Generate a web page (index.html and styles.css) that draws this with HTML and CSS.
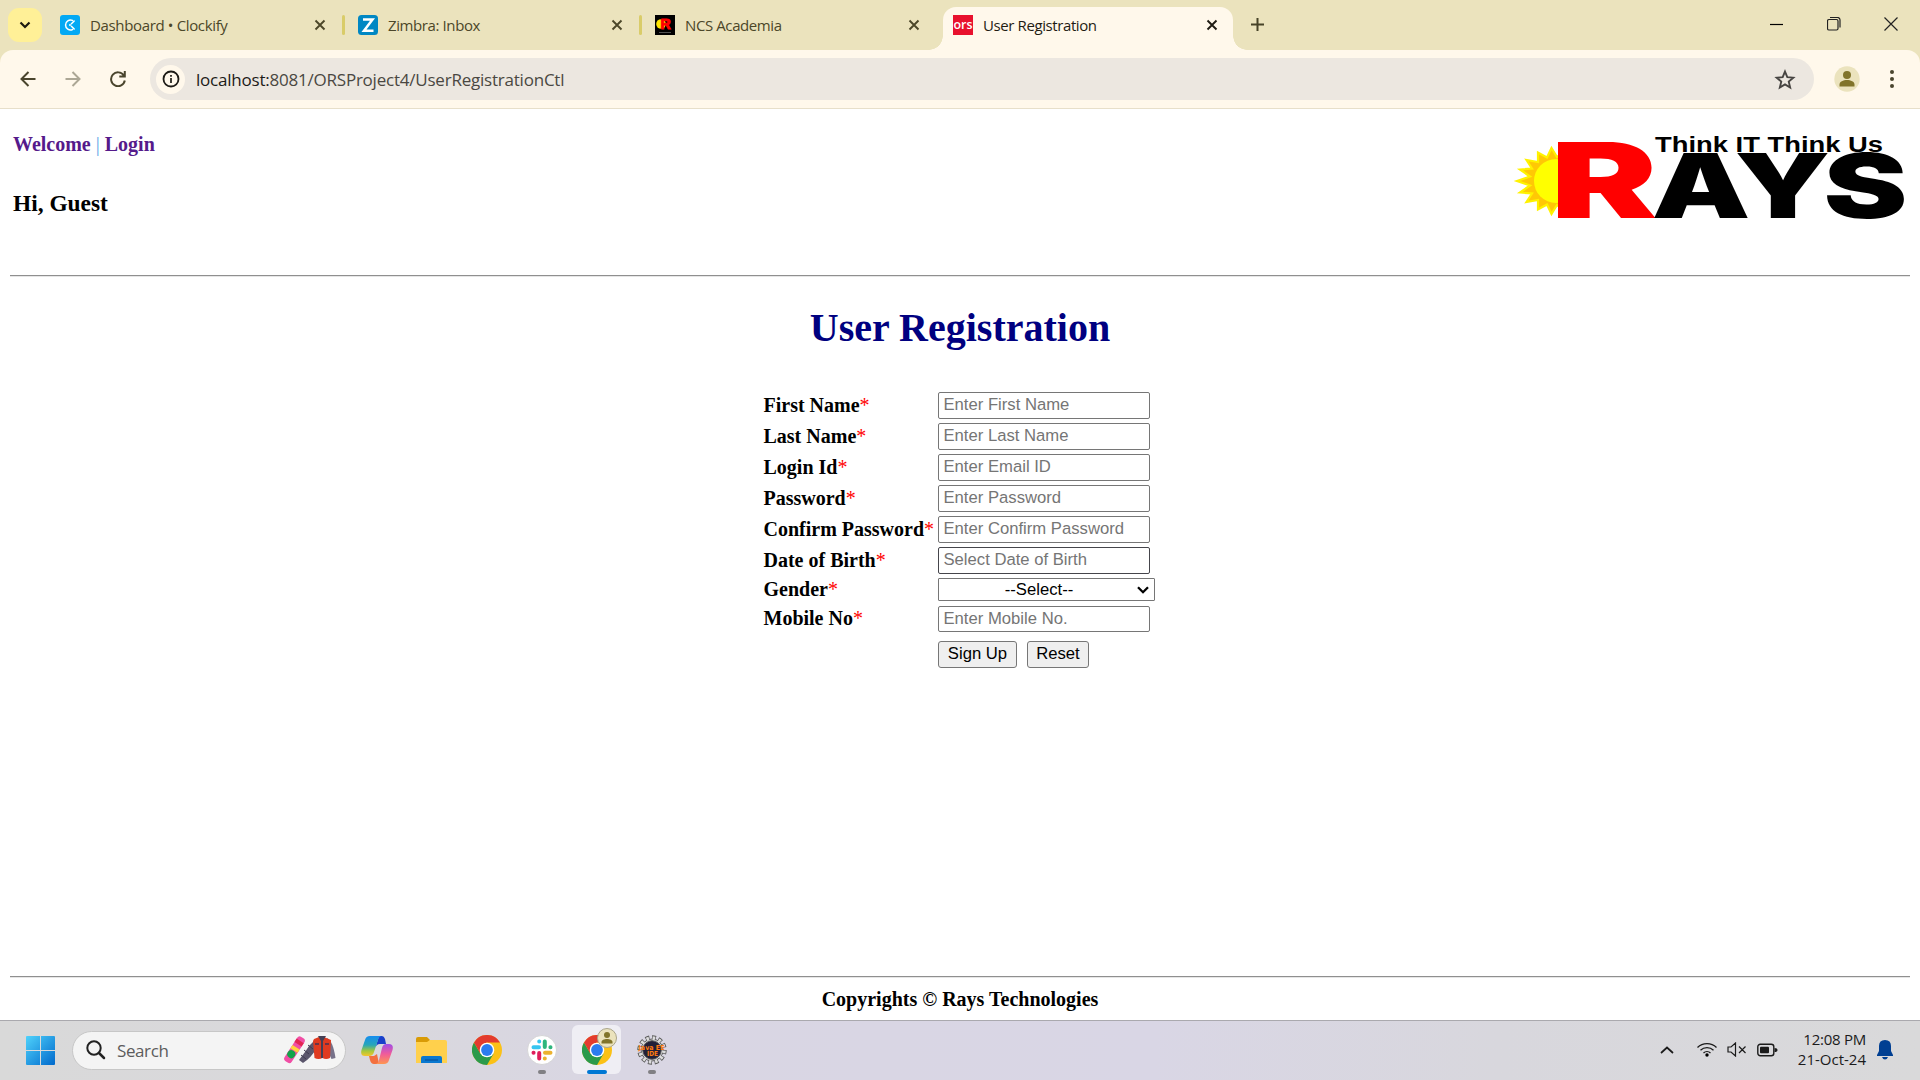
FILE: index.html
```html
<!DOCTYPE html>
<html lang="en">
<head>
<meta charset="utf-8">
<title>User Registration</title>
<link rel="stylesheet" href="styles.css">
</head>
<body>
<header class="tabstrip">
  <button class="tab-search" aria-label="Search tabs"><svg width="12" height="8" viewBox="0 0 12 8"><path d="M1.5 1.5 6 6l4.500-4.500" fill="none" stroke="#1d1b10" stroke-width="2.200"/></svg></button>
  <div class="tab tab-first">
    <svg class="favicon" viewBox="0 0 20 20"><rect width="20" height="20" rx="3" fill="#03a9f4"/><path d="M12.500 5.400A5 5 0 1 0 12.500 14.600M14.200 6l-2.800 2.800M14.200 14l-2.800-2.800" fill="none" stroke="#fff" stroke-width="1.500" stroke-linecap="round"/><circle cx="10" cy="10" r="1" fill="#fff"/></svg>
    <span class="tab-title t1">Dashboard • Clockify</span>
    <svg class="close" viewBox="0 0 12 12"><path d="M1.500 1.500l9 9M10.500 1.500l-9 9"/></svg>
  </div>
  <i class="divider"></i>
  <div class="tab">
    <svg class="favicon" viewBox="0 0 20 20"><rect width="20" height="20" rx="3.500" fill="#0087c3"/><path d="M5 4.500h9.500L6 15.700h9.500" fill="none" stroke="#fff" stroke-width="2.500"/></svg>
    <span class="tab-title t2">Zimbra: Inbox</span>
    <svg class="close" viewBox="0 0 12 12"><path d="M1.500 1.500l9 9M10.500 1.500l-9 9"/></svg>
  </div>
  <i class="divider"></i>
  <div class="tab">
    <svg class="favicon" viewBox="0 0 20 20"><rect width="20" height="20"/><circle cx="6" cy="9" r="4.800" fill="#ffe600"/><text x="5.500" y="14" class="ncs-r">R</text><path d="M4 17.500h12" stroke="#666" stroke-width=".8"/></svg>
    <span class="tab-title t3">NCS Academia</span>
    <svg class="close" viewBox="0 0 12 12"><path d="M1.500 1.500l9 9M10.500 1.500l-9 9"/></svg>
  </div>
  <div class="tab active">
    <svg class="favicon" viewBox="0 0 20 20"><rect width="20" height="20" fill="#e8112d"/><text x="0.500" y="14" class="ors" textLength="19" lengthAdjust="spacingAndGlyphs">ors</text></svg>
    <span class="tab-title t4">User Registration</span>
    <svg class="close" viewBox="0 0 12 12"><path d="M1.500 1.500l9 9M10.500 1.500l-9 9"/></svg>
  </div>
  <svg class="newtab" viewBox="0 0 13 13"><path d="M6.500 0v13M0 6.500h13" stroke="#474328" stroke-width="2"/></svg>
  <div class="window-buttons">
    <svg width="14" height="14" viewBox="0 0 14 14"><path d="M0 7.500h13" stroke="#000"/></svg>
    <svg width="14" height="14" viewBox="0 0 14 14"><rect x=".5" y="2.500" width="10.500" height="10.500" rx="1.500"/><path d="M3 .5h7.500a2.500 2.500 0 0 1 2.500 2.500v7.500"/></svg>
    <svg width="14" height="14" viewBox="0 0 14 14"><path d="M.5.500l13 13M13.500.500l-13 13"/></svg>
  </div>
</header>
<nav class="toolbar">
  <svg class="nav-icon" viewBox="0 0 16 16"><path d="M15.500 8H2M8.500 1 1.500 8l7 7"/></svg>
  <svg class="nav-icon off" viewBox="0 0 16 16"><path d="M.500 8H14M7.500 1l7 7-7 7"/></svg>
  <svg class="nav-icon" viewBox="0 0 16 16"><path d="M13.800 4.500A6.900 6.900 0 1 0 14.800 9.500M14.800 0v5.500H9.300"/></svg>
  <div class="omnibox">
    <span class="site-info"><svg width="18" height="18" viewBox="0 0 18 18"><circle cx="9" cy="9" r="7.500" fill="none" stroke="#1d1b16" stroke-width="1.800"/><path d="M9 8v5M9 5v1.700" stroke="#1d1b16" stroke-width="1.700"/></svg></span>
    <span class="url"><b>localhost:</b>8081/ORSProject4/UserRegistrationCtl</span>
    <svg class="star" viewBox="0 0 20 20"><path d="M10 2.300l2.100 5.100 5.500.5-4.200 3.600 1.300 5.400L10 14l-4.700 2.900 1.300-5.400-4.200-3.600 5.500-.5z" fill="none" stroke="#474542" stroke-width="1.700"/></svg>
  </div>
  <svg class="avatar" viewBox="0 0 26 26"><circle cx="13" cy="13" r="12.700" fill="#ebe3bd"/><circle cx="13" cy="9" r="4" fill="#81742a"/><path d="M5.500 20.500v-2c0-6 15-6 15 0v2z" fill="#81742a"/></svg>
  <svg class="menu" viewBox="0 0 4 20"><circle cx="2" cy="3" r="2"/><circle cx="2" cy="10" r="2"/><circle cx="2" cy="17" r="2"/></svg>
</nav>
<main class="page">
  <section class="page-head">
    <div>
      <div class="links"><a>Welcome</a> <span class="bar">|</span> <a>Login</a></div>
      <h3>Hi, Guest</h3>
    </div>
    <svg class="logo" width="400" height="100" viewBox="1510 128 400 100">
      <polygon class="sun-rays" points="1517,181 1530,176.500 1520,169.500 1532,168.500 1526.500,160 1538,162 1538,152.500 1547,157.500 1551.500,148 1557,157 1560,155 1560,207 1557,205 1551.500,214 1547,204.500 1538,209.500 1538,200 1526.500,202 1532,193.500 1520,192.500 1530,185.500"/>
      <circle cx="1556" cy="181" r="22" fill="#ff0"/>
      <text x="1550.500" y="218" class="word red" font-size="104" textLength="107" lengthAdjust="spacingAndGlyphs">R</text>
      <text x="1651.500" y="218" class="word" font-size="89" textLength="99" lengthAdjust="spacingAndGlyphs">A</text>
      <text x="1734.500" y="218" class="word" font-size="89" textLength="96" lengthAdjust="spacingAndGlyphs">Y</text>
      <text x="1823.500" y="218" class="word" font-size="89" textLength="84" lengthAdjust="spacingAndGlyphs">S</text>
      <text x="1655" y="151.500" class="tagline" textLength="228" lengthAdjust="spacingAndGlyphs">Think IT Think Us</text>
    </svg>
  </section>
  <hr>
  <h1>User Registration</h1>
  <form class="form">
    <label>First Name<em>*</em></label><input placeholder="Enter First Name">
    <label>Last Name<em>*</em></label><input placeholder="Enter Last Name">
    <label>Login Id<em>*</em></label><input placeholder="Enter Email ID">
    <label>Password<em>*</em></label><input type="password" placeholder="Enter Password">
    <label>Confirm Password<em>*</em></label><input type="password" placeholder="Enter Confirm Password">
    <label>Date of Birth<em>*</em></label><input class="dob" placeholder="Select Date of Birth">
    <label class="gender">Gender<em>*</em></label>
    <div class="select"><span>--Select--</span><svg width="12" height="8" viewBox="0 0 12 8"><path d="M1 1.200l5 5 5-5" fill="none" stroke="#000" stroke-width="2.300"/></svg></div>
    <label class="mobile">Mobile No<em>*</em></label><input class="short" placeholder="Enter Mobile No.">
    <div class="actions"><button type="button" class="signup">Sign Up</button><button type="button" class="reset">Reset</button></div>
  </form>
  <footer><hr><p>Copyrights © Rays Technologies</p></footer>
</main>
<div class="taskbar">
  <svg class="start" viewBox="0 0 29 29"><defs><linearGradient id="win" x1="0" y1="0" x2="29" y2="29" gradientUnits="userSpaceOnUse"><stop offset="0" stop-color="#4fd2fb"/><stop offset="1" stop-color="#0069cc"/></linearGradient></defs><path fill="url(#win)" d="M1 0h13v14H0V1q0-1 1-1zM15 0h13q1 0 1 1v13H15zM0 15h14v14H1q-1 0-1-1zM15 15h14v13q0 1-1 1H15z"/></svg>
  <div class="search">
    <svg class="lens" viewBox="0 0 20 20"><circle cx="8" cy="8" r="6.700" fill="none" stroke="#222" stroke-width="2"/><path d="M13 13l5 5" stroke="#222" stroke-width="2.500" stroke-linecap="round"/></svg>
    <span>Search</span>
    <svg class="highlight" viewBox="0 0 54 30"><g transform="rotate(33 11 15)"><rect x="7" y="0" width="8.500" height="29" rx="3" fill="#f04fa5"/><path d="M7 4h8.500v4H7z" fill="#e32652"/><path d="M7 11.500h8.500v4H7z" fill="#ffd33d"/><circle cx="11" cy="20" r="4" fill="#12a34a"/></g><path d="M31 6Q26 10 22 17l-6 8 4 3q8-5 13-14z" fill="#5b566c"/><path d="M21 15l5 4M25 10l5 4M18 20l5 4" stroke="#3f3b50" fill="none"/><path d="M44 3q6 3 8.500 20l-4 1-6-12z" fill="#77728a"/><path d="M31 4l5-2h5l7 3-1 18q-4 2-7.500 0-4 2-8 0L30 6z" fill="#df3a20"/><path d="M35 1h8l-3 5v17h-2V6z" fill="#443f54"/><path d="M32 9h4M42 9h4" stroke="#6c3347" stroke-width="2"/></svg>
  </div>
  <div class="app"><svg width="32" height="30" viewBox="0 0 32 30"><defs><linearGradient id="cp1" x2="0" y2="1"><stop stop-color="#168df0"/><stop offset=".45" stop-color="#27a6b8"/><stop offset=".75" stop-color="#a6c83a"/><stop offset="1" stop-color="#f4c52c"/></linearGradient><linearGradient id="cp2" x2="0" y2="1"><stop stop-color="#a04ee6"/><stop offset=".5" stop-color="#f05c9a"/><stop offset="1" stop-color="#ff9651"/></linearGradient></defs><path d="M18 1h3q2 0 3 3l1 5h-6q-4 0-5 5z" fill="#1a3fca"/><path d="M9 1h12q-3 0-4 4l-4 12q-1 4-5 4H4q-5 0-3.500-6L4 5q1-4 5-4z" fill="url(#cp1)"/><path d="M8 21h5l3-2 2 10h-5q-3 0-4-4z" fill="#f3703f"/><path d="M25 9h3q5 0 3.500 6L28 25q-1 4-5 4h-9q3 0 4-4l3-12q1-4 4-4z" fill="url(#cp2)"/></svg></div>
  <div class="app"><svg width="31" height="28" viewBox="0 0 31 28"><path d="M0 3q0-2 2-2h9l3 3-2 4H0z" fill="#d99b06"/><path d="M0 6h11l3-2h15q2 0 2 2v21H0z" fill="#ffd04c"/><path d="M5 27v-5q0-2 2-2h17q2 0 2 2v5z" fill="#0a78d0"/><path d="M9 24h13" stroke="#064b91"/></svg></div>
  <div class="app"><svg width="30" height="30" viewBox="0 0 30 30"><g id="chrome"><circle cx="15" cy="15" r="15" fill="#fbc116"/><path d="M15 15 8.500 18.700 2 7.500A15 15 0 0 0 15 30l6.500-11.200z" fill="#2b9a4b"/><path d="M15 7.500h13A15 15 0 0 0 2 7.500l6.500 11.200Q7 9 15 7.500z" fill="#e33b2e"/><circle cx="15" cy="15" r="7.300" fill="#fff"/><circle cx="15" cy="15" r="5.900" fill="#2b7cf0"/></g></svg></div>
  <div class="app"><svg width="30" height="30" viewBox="0 0 30 30"><circle cx="15" cy="15" r="14.500" fill="#fff" stroke="#ccc" stroke-width=".7"/><g fill="none" stroke-width="4" stroke-linecap="round"><path d="M12.200 6.500v.1M6.500 12.200H12" stroke="#36c5f0"/><path d="M17.800 6.500V12M23.500 12.200h-.1" stroke="#2eb67d"/><path d="M17.800 23.500v-.1M23.500 17.800H18" stroke="#ecb22e"/><path d="M12.200 23.500V18M6.500 17.800h.1" stroke="#e01e5a"/></g></svg><i class="run"></i></div>
  <div class="app current"><svg width="30" height="30" viewBox="0 0 30 30"><use href="#chrome"/></svg><svg class="badge" viewBox="0 0 20 20"><circle cx="10" cy="10" r="9.500" fill="#ebe3bd" stroke="#aaa58a"/><circle cx="10" cy="7" r="3" fill="#81742a"/><path d="M4.500 15.500V14c0-4 11-4 11 0v1.500z" fill="#81742a"/></svg><i class="run wide"></i></div>
  <div class="app"><svg class="gear" width="30" height="30" viewBox="0 0 30 30"><g fill="none"><circle cx="15" cy="15" r="12.500" stroke="#5a5a5a" stroke-width="4.400" pathLength="120" stroke-dasharray="6 4"/><circle cx="15" cy="15" r="11" fill="#dcdcdc" stroke="#5a5a5a"/><circle cx="15" cy="15" r="12" stroke="#dcdcdc" stroke-width="3.600" pathLength="120" stroke-dasharray="4 6" stroke-dashoffset="-1"/></g><circle cx="15" cy="15" r="9.300" fill="#221f38" stroke="#555"/><text x="1.500" y="14.500" class="jee" textLength="26" lengthAdjust="spacingAndGlyphs">Java EE</text><text x="10" y="20.500" class="jee" textLength="11" lengthAdjust="spacingAndGlyphs">IDE</text></svg><i class="run"></i></div>
  <div class="tray">
    <svg class="chev" viewBox="0 0 14 8"><path d="M1 7l6-5.500L13 7" fill="none" stroke="#1b1b1b" stroke-width="1.700"/></svg>
    <svg class="wifi" viewBox="0 0 20 15"><g fill="none" stroke="#1b1b1b" stroke-width="1.300"><path d="M.5 5.500a13.500 13.500 0 0 1 19 0M3.500 8.300a9.300 9.300 0 0 1 13 0M6.500 11a5 5 0 0 1 7 0"/></g><circle cx="10" cy="13" r="1.700"/></svg>
    <svg class="mute" viewBox="0 0 20 15"><path d="M1 5h3l4.500-4v13L4 10H1zM12 4.500l6.500 6.500M18.500 4.500 12 11" fill="none" stroke="#1b1b1b" stroke-width="1.200"/></svg>
    <svg class="battery" viewBox="0 0 21 14"><rect x=".8" y="1.300" width="16" height="11.400" rx="2.500" fill="none" stroke="#1b1b1b" stroke-width="1.400"/><rect x="3" y="3.700" width="9" height="6.600" rx="1" fill="#1b1b1b"/><path d="M17.500 5q3 0 3 2t-3 2z" fill="#1b1b1b"/></svg>
    <div class="clock"><span class="time">12:08 PM</span><span class="date">21-Oct-24</span></div>
    <svg class="bell" viewBox="0 0 16 20"><path d="M8 0q6 0 6 6v5l2 4v1H0v-1l2-4V6q0-6 6-6zM5 17h6q-1 2.500-3 2.500T5 17z" fill="#003f92"/></svg>
  </div>
</div>
</body>
</html>
```
FILE: styles.css
```css
* { box-sizing: border-box; }
body { margin: 0; width: 1920px; height: 1080px; overflow: hidden; display: flex; flex-direction: column; background: #fff; font-family: "Open Sans", "Noto Sans", sans-serif; }
svg { display: block; flex: none; }
button { padding: 0; }

.tabstrip { height: 63px; margin-bottom: -13px; flex: none; display: flex; align-items: flex-start; background: #ebe3bd; }
.tab-search { width: 34px; height: 34px; margin: 8px 0 0 8px; border: 0; border-radius: 11px; background: #fff097; display: flex; align-items: center; justify-content: center; }
.tab { width: 295px; height: 50px; padding: 0 17px 0 13px; display: flex; align-items: center; color: #4c4729; }
.tab-first { width: 301px; padding-left: 18px; }
.favicon { width: 20px; height: 20px; }
.tab-title { margin-left: 10px; flex: 1; font-size: 15px; line-height: 20px; white-space: nowrap; }
.t1 { letter-spacing: -.35px; }
.t2, .t3, .t4 { letter-spacing: -.4px; }
.close { width: 12px; height: 12px; fill: none; stroke: #4c4729; stroke-width: 1.9; }
.divider { width: 3px; height: 20px; margin: 15px 0 0 -1px; border-radius: 2px; background: #d9cc69; }
.tab.active { width: 290px; height: 43px; margin: 7px 0 0 6px; padding: 0 15px 7px 10px; border-radius: 13px 13px 0 0; background: #fff8eb; color: #1f1c13; position: relative; }
.tab.active::before, .tab.active::after { content: ""; position: absolute; bottom: 0; width: 14px; height: 14px; }
.tab.active::before { left: -14px; background: radial-gradient(circle at 0 0, #ebe3bd 13.5px, #fff8eb 14px); }
.tab.active::after { right: -14px; background: radial-gradient(circle at 100% 0, #ebe3bd 13.5px, #fff8eb 14px); }
.active .close { stroke: #1f1c13; }
.ncs-r { font: bold 14px "Liberation Sans", sans-serif; fill: #f00; stroke: #f00; }
.ors { font: 600 12px "Open Sans", sans-serif; fill: #fff; }
.newtab { width: 13px; height: 13px; margin: 18px 0 0 18px; }
.window-buttons { margin: 17px 22px 0 auto; display: flex; gap: 43px; }
.window-buttons svg { fill: none; stroke: #222; stroke-width: 1.2; }

.toolbar { height: 59px; flex: none; padding: 0 26px 0 20px; display: flex; align-items: center; background: #fff8eb; border-bottom: 1px solid #e7dfca; border-radius: 13px 13px 0 0; position: relative; }
.nav-icon { width: 16px; height: 16px; margin-right: 29px; fill: none; stroke: #4a452d; stroke-width: 2; }
.nav-icon.off { stroke: #aca795; }
.omnibox { width: 1665px; height: 42px; margin-left: -5px; border-radius: 21px; background: #ece7e0; display: flex; align-items: center; padding: 0 18px 0 6px; }
.site-info { width: 29px; height: 29px; border-radius: 50%; background: #fff8eb; display: flex; align-items: center; justify-content: center; }
.url { margin-left: 11px; flex: 1; font-size: 17px; letter-spacing: -.22px; color: #4a4742; }
.url b { font-weight: 400; color: #1c1b18; }
.star { width: 22px; height: 22px; margin-top: 1px; }
.avatar { width: 26px; height: 26px; margin-left: 20px; }
.menu { width: 4px; height: 20px; margin-left: 30px; fill: #4a452d; }

.page { flex: 1; display: flex; flex-direction: column; padding: 0 10px; font-family: "Liberation Serif", "Times New Roman", serif; font-size: 20px; color: #000; }
.page-head { height: 166px; flex: none; padding: 19px 0 0 3px; display: flex; justify-content: space-between; }
.links { margin-top: 5px; height: 23px; line-height: 23px; font-weight: bold; color: #551a8b; }
.bar { color: #5fa9e8; font-weight: 400; }
h3 { margin: 34px 0 0; font-size: 23.4px; line-height: 27px; }
.logo { overflow: visible; }
.sun-rays { fill: #ffc805; stroke: #fff200; stroke-width: 2.2; }
.word { font-family: "Inter", sans-serif; font-weight: 900; }
.red { fill: #f00; }
.tagline { font: bold 21.5px "Liberation Sans", sans-serif; }
hr { width: 100%; height: 2px; margin: 0; border: 0; border-top: 1px solid #8f8f8f; border-bottom: 1px solid #e6e6e6; flex: none; }
h1 { margin: 28px 0 0; text-align: center; font-size: 40px; line-height: 46px; color: #000080; }
.form { width: 393px; margin: 41px auto 0; display: grid; grid-template-columns: 174px 217px; grid-template-rows: repeat(6, 31px) 28px 31px 31px; align-items: start; }
.form label { line-height: 23px; padding-top: 2px; font-weight: bold; white-space: nowrap; }
.form label.gender { padding-top: 0; }
.form label.mobile { padding-top: 1px; }
.form em { font-style: normal; font-weight: 400; color: #f00; }
.form input { width: 212px; height: 27px; padding: 0 4px 2px 5px; border: 1px solid #767676; border-radius: 2px; font: 16.67px "Liberation Sans", Arial, sans-serif; }
.form input::placeholder { color: #757575; }
.form input.dob { border-color: #45454b; }
.form input.short { height: 26px; padding-bottom: 1px; }
.select { width: 217px; height: 23px; padding: 0 5px 0 3px; border: 1px solid #767676; border-radius: 1px; display: flex; align-items: center; font: 16.67px "Liberation Sans", Arial, sans-serif; }
.select span { flex: 1; text-align: center; }
.actions { grid-column: 2; display: flex; gap: 10px; padding-top: 4px; }
.actions button { height: 27px; padding: 0 0 2px 1px; border: 1px solid #767676; border-radius: 3px; background: #efefef; color: #000; font: 16.67px "Liberation Sans", Arial, sans-serif; }
.signup { width: 79px; }
.reset { width: 62px; }
footer { margin-top: auto; height: 44px; }
footer p { margin: 10px 0 0; text-align: center; font-weight: bold; line-height: 23px; }

.taskbar { height: 60px; flex: none; padding: 0 27px 2px 26px; display: flex; align-items: center; border-top: 1px solid #aaa9ae; background: linear-gradient(90deg, #d9d9d9 0, #d9d8dc 18%, #d9d6e3 32%, #d9d6e5 60%, #d8d7dd 78%, #d9d9da 100%); }
.start { width: 29px; height: 29px; margin-top: 1px; }
.search { width: 274px; height: 39px; margin: 1px 0 0 17px; padding: 0 8px 0 13px; border: 1px solid #c7c7c7; border-radius: 20px; background: #f4f4f4; display: flex; align-items: center; }
.lens { width: 20px; height: 20px; }
.search span { margin: 1px 0 0 11px; flex: 1; font-size: 17px; letter-spacing: -.4px; color: #5c5c5c; }
.highlight { width: 54px; height: 30px; }
.app { width: 49px; height: 49px; margin-left: 6px; border-radius: 6px; display: flex; align-items: center; justify-content: center; position: relative; }
.search + .app { margin-left: 6px; }
.current { background: #efeef4; }
.badge { position: absolute; left: 25px; top: 3px; width: 20px; height: 20px; }
.run { position: absolute; bottom: 0; width: 8px; height: 4px; border-radius: 2px; background: #818084; }
.run.wide { width: 20px; background: #0078d4; }
.gear { overflow: visible; }
.jee { font: bold 7px "DejaVu Sans", sans-serif; fill: #ff7a0f; }
.tray { margin-left: auto; display: flex; align-items: center; color: #1b1b1b; }
.chev { width: 14px; height: 8px; }
.wifi { width: 20px; height: 15px; margin-left: 23px; }
.mute { width: 20px; height: 15px; margin-left: 10px; }
.battery { width: 21px; height: 14px; margin-left: 10px; }
.clock { width: 88px; margin-top: -2px; display: flex; flex-direction: column; align-items: flex-end; font-size: 15px; line-height: 20px; white-space: nowrap; }
.time { letter-spacing: -.25px; }
.date { letter-spacing: 0; }
.bell { width: 16px; height: 20px; margin: 1px 0 0 11px; }
```
